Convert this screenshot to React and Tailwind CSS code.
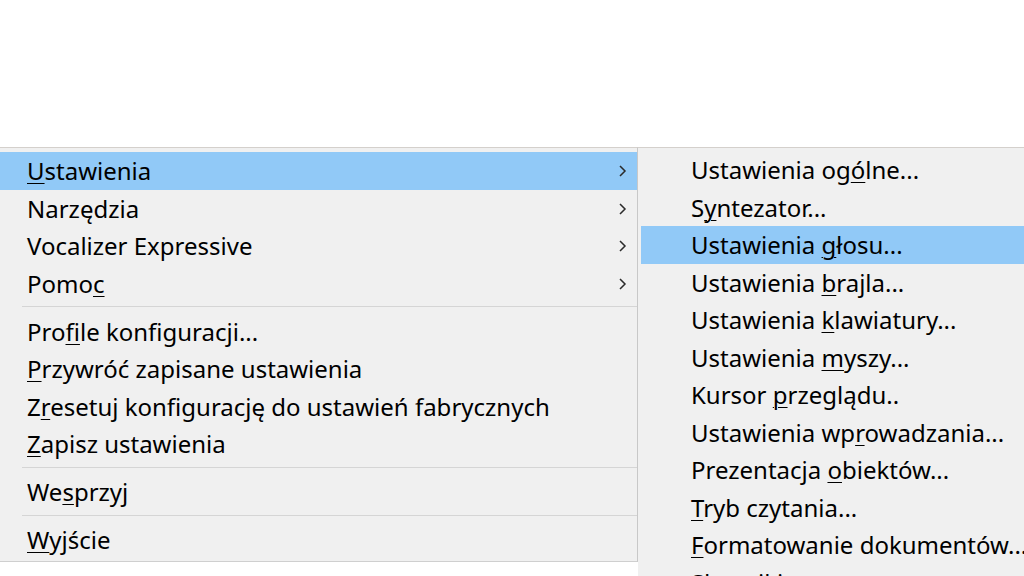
import React from 'react';

// Menu label with an access-key letter underlined
const Label = ({ text, hot }) => {
  if (hot === undefined || hot < 0) return <span>{text}</span>;
  return (
    <span>
      {text.slice(0, hot)}
      <u className="underline decoration-1 underline-offset-[3px]">{text[hot]}</u>
      {text.slice(hot + 1)}
    </span>
  );
};

const Chevron = () => (
  <svg width="9" height="14" viewBox="0 0 9 14" className="text-[#2b2b2b]">
    <path d="M2 2 L7 7 L2 12" fill="none" stroke="currentColor" strokeWidth="1.5" />
  </svg>
);

const mainItems = [
  { text: 'Ustawienia', hot: 0, sub: true, active: true },
  { text: 'Narzędzia', sub: true },
  { text: 'Vocalizer Expressive', sub: true },
  { text: 'Pomoc', hot: 4, sub: true },
  { sep: true },
  { text: 'Profile konfiguracji...', hot: 3 },
  { text: 'Przywróć zapisane ustawienia', hot: 0 },
  { text: 'Zresetuj konfigurację do ustawień fabrycznych', hot: 1 },
  { text: 'Zapisz ustawienia', hot: 0 },
  { sep: true },
  { text: 'Wesprzyj', hot: 2 },
  { sep: true },
  { text: 'Wyjście', hot: 0 },
];

const subItems = [
  { text: 'Ustawienia ogólne...', hot: 13 },
  { text: 'Syntezator...', hot: 1 },
  { text: 'Ustawienia głosu...', hot: 11, active: true },
  { text: 'Ustawienia brajla...', hot: 11 },
  { text: 'Ustawienia klawiatury...', hot: 11 },
  { text: 'Ustawienia myszy...', hot: 11 },
  { text: 'Kursor przeglądu..', hot: 7 },
  { text: 'Ustawienia wprowadzania...', hot: 13 },
  { text: 'Prezentacja obiektów...', hot: 12 },
  { text: 'Tryb czytania...', hot: 0 },
  { text: 'Formatowanie dokumentów...', hot: 0 },
  { text: 'Słowniki mowy', hot: -1 },
];

export default function App() {
  return (
    <div
      className="h-[576px] w-[1024px] overflow-hidden bg-white text-[24px] text-black"
      style={{ fontFamily: '"Noto Sans", "Open Sans", sans-serif' }}
    >
      <div className="h-[147px]" />
      <div className="flex items-start">
        {/* Main menu */}
        <div className="w-[638px] shrink-0 border-t border-r border-b border-[#d4d0cc] border-r-[#c8c8c8] border-b-[#cfcfcf] bg-[#f0f0f0] pt-[4px] pb-[2px]">
          {mainItems.map((it, i) =>
            it.sep ? (
              <div key={i} className="flex h-[10.5px] items-start pl-[22px] pt-[4px]">
                <div className="h-px w-full bg-[#d5d5d5]" />
              </div>
            ) : (
              <div
                key={i}
                className={`flex h-[37.5px] items-center justify-between pl-[27px] pr-[10px] pt-px leading-none whitespace-nowrap ${
                  it.active ? 'bg-[#91c9f7]' : ''
                }`}
              >
                <Label text={it.text} hot={it.hot} />
                {it.sub && <Chevron />}
              </div>
            )
          )}
        </div>

        {/* Submenu */}
        <div className="min-w-0 flex-1 border-t border-[#d4d0cc] bg-[#f0f0f0] pt-[3px] pl-[3px]">
          {subItems.map((it, i) => (
            <div
              key={i}
              className={`flex h-[37.5px] items-center pl-[50px] pt-px leading-none whitespace-nowrap ${
                it.active ? 'bg-[#91c9f7]' : ''
              }`}
            >
              <Label text={it.text} hot={it.hot} />
            </div>
          ))}
        </div>
      </div>
    </div>
  );
}
